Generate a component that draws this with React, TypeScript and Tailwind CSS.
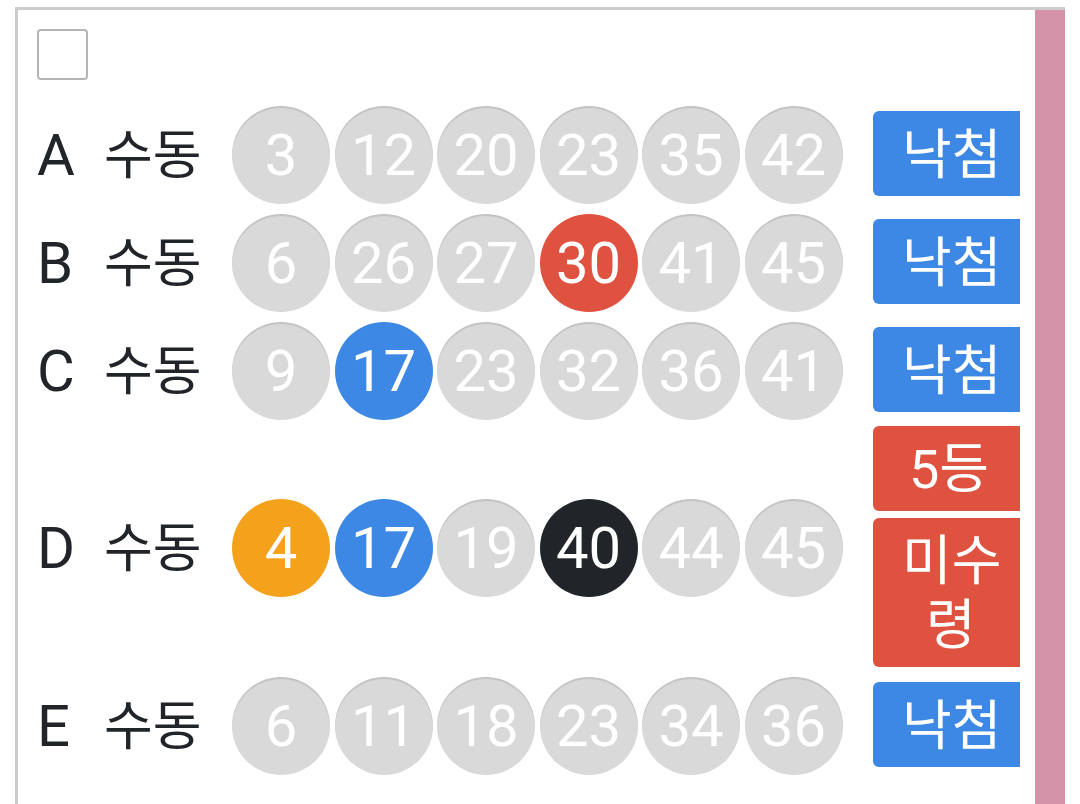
import React from "react";

type Ball = { n: number; c?: "red" | "blue" | "orange" | "black" };
type Row = { label: string; balls: Ball[]; h: string; result: "lose" | "win" };

const rows: Row[] = [
  { label: "A", h: "h-[108px]", result: "lose", balls: [{ n: 3 }, { n: 12 }, { n: 20 }, { n: 23 }, { n: 35 }, { n: 42 }] },
  { label: "B", h: "h-[108px]", result: "lose", balls: [{ n: 6 }, { n: 26 }, { n: 27 }, { n: 30, c: "red" }, { n: 41 }, { n: 45 }] },
  { label: "C", h: "h-[108px]", result: "lose", balls: [{ n: 9 }, { n: 17, c: "blue" }, { n: 23 }, { n: 32 }, { n: 36 }, { n: 41 }] },
  { label: "D", h: "h-[246px]", result: "win", balls: [{ n: 4, c: "orange" }, { n: 17, c: "blue" }, { n: 19 }, { n: 40, c: "black" }, { n: 44 }, { n: 45 }] },
  { label: "E", h: "h-[110px]", result: "lose", balls: [{ n: 6 }, { n: 11 }, { n: 18 }, { n: 23 }, { n: 34 }, { n: 36 }] },
];

function BallView({ b }: { b: Ball }) {
  let cls = "bg-[#d9d9d9] shadow-[inset_0_2px_1px_rgba(0,0,0,0.1)]";
  if (b.c === "red") cls = "bg-[#e05240]";
  if (b.c === "blue") cls = "bg-[#3d88e5]";
  if (b.c === "orange") cls = "bg-[#f4a11b]";
  if (b.c === "black") cls = "bg-[#212529]";
  return (
    <div
      className={`w-[98px] h-[98px] shrink-0 rounded-full flex items-center justify-center text-white text-[58px] leading-none ${cls}`}
      style={{ fontFamily: "Roboto, 'Noto Sans', sans-serif" }}
    >
      {b.n}
    </div>
  );
}

const kr = { fontFamily: "Roboto, 'Noto Sans CJK KR', sans-serif" };

export default function App() {
  return (
    <div className="w-[1080px] h-[804px] bg-white overflow-hidden pt-[7px] pl-[15px]">
      <div className="w-[1050px] h-[797px] border-t-[3px] border-l-[3px] border-[#cccccc] flex">
        <div className="w-[1002px] shrink-0 overflow-hidden flex flex-col">
          <div className="pt-[19px] pl-[19px] pb-[21px]">
            <div className="w-[51px] h-[51px] border-2 border-[#b5b5b5] rounded-[4px] bg-white" />
          </div>
          {rows.map((r) => (
            <div key={r.label} className={`flex items-center pl-[19px] shrink-0 ${r.h}`}>
              <div className="w-[66px] shrink-0 text-[58px] leading-none text-[#212529]" style={kr}>
                {r.label}
              </div>
              <div className="w-[129px] shrink-0 pl-[1px] text-[53px] leading-none text-[#212529] mt-[2px]" style={kr}>
                수동
              </div>
              <div className="flex gap-[4.5px] shrink-0">
                {r.balls.map((b, i) => (
                  <BallView key={i} b={b} />
                ))}
              </div>
              <div className="ml-[30.5px] -mt-[3px] shrink-0">
                {r.result === "lose" ? (
                  <div
                    className="w-[160px] h-[85px] rounded-[6px] bg-[#3d88e5] text-white text-[54px] leading-none flex items-center pl-[29px] pt-[4px]"
                    style={kr}
                  >
                    낙첨
                  </div>
                ) : (
                  <div className="flex flex-col gap-[7px]">
                    <div
                      className="w-[160px] h-[85px] rounded-[6px] bg-[#e05240] text-white text-[54px] leading-none flex items-center pl-[36px] pt-[3px]"
                      style={kr}
                    >
                      5등
                    </div>
                    <div
                      className="w-[160px] h-[149px] rounded-[6px] bg-[#e05240] text-white text-[54px] leading-[64px] flex flex-col justify-center pl-[29px] pt-[2px]"
                      style={kr}
                    >
                      <span>미수</span>
                      <span className="pl-[24px]">령</span>
                    </div>
                  </div>
                )}
              </div>
            </div>
          ))}
        </div>
        <div className="w-[15px] shrink-0" />
        <div className="w-[30px] shrink-0 bg-[#d492a9]" />
      </div>
    </div>
  );
}
